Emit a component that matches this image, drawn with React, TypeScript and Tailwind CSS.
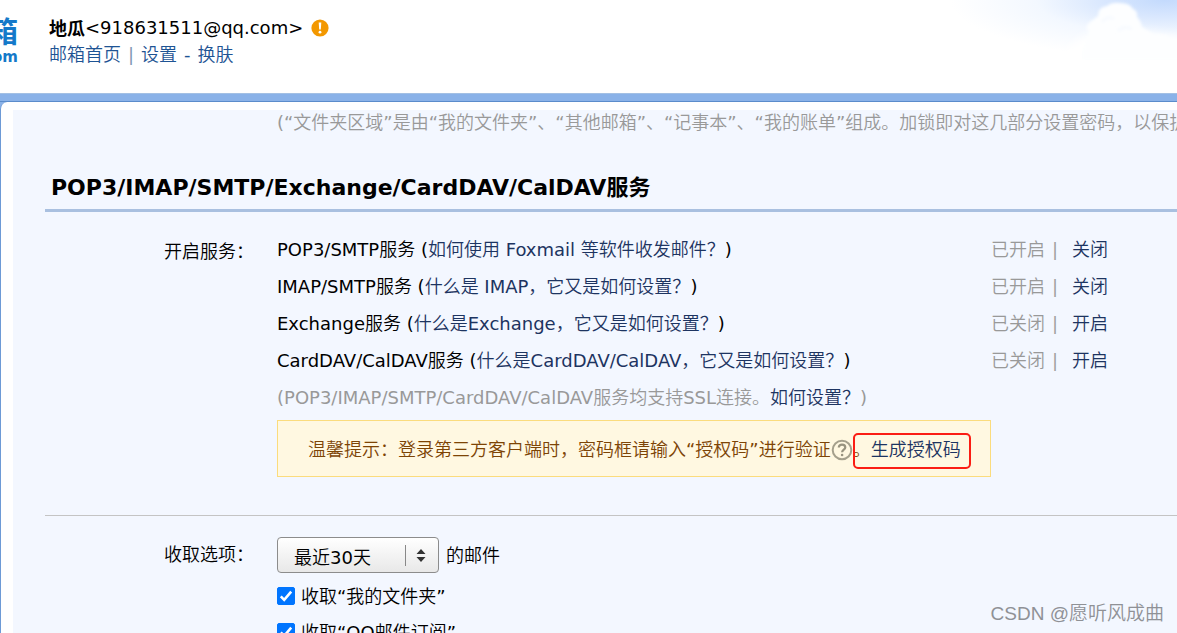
import { useState } from 'react';

type Service = {
  name: string;
  help: string;
  enabled: boolean;
};

const services: Service[] = [
  { name: 'POP3/SMTP服务', help: '如何使用 Foxmail 等软件收发邮件？', enabled: true },
  { name: 'IMAP/SMTP服务', help: '什么是 IMAP，它又是如何设置？', enabled: true },
  { name: 'Exchange服务', help: '什么是Exchange，它又是如何设置？', enabled: false },
  { name: 'CardDAV/CalDAV服务', help: '什么是CardDAV/CalDAV，它又是如何设置？', enabled: false },
];

function Sky() {
  return (
    <svg className="absolute right-0 top-0" width="237" height="60" viewBox="0 0 237 60" aria-hidden="true">
      <defs>
        <radialGradient id="sky" gradientUnits="userSpaceOnUse" cx="0" cy="0" r="1" gradientTransform="translate(225 0) scale(215 58)">
          <stop offset="0" stopColor="#c3dafd" />
          <stop offset="0.3" stopColor="#dae8fe" />
          <stop offset="0.6" stopColor="#f3f8ff" />
          <stop offset="1" stopColor="#ffffff" />
        </radialGradient>
        <filter id="soft" x="-20%" y="-20%" width="140%" height="140%">
          <feGaussianBlur stdDeviation="1.5" />
        </filter>
        <filter id="softer" x="-20%" y="-40%" width="140%" height="180%">
          <feGaussianBlur stdDeviation="4" />
        </filter>
      </defs>
      <rect width="237" height="60" fill="url(#sky)" />
      <path d="M120 60 Q140 32 160 34 L205 32 Q222 34 245 38 V66 H120 Z" fill="#fff" filter="url(#softer)" />
      <path
        d="M142 50 Q146 40 149 32 Q144 26 150 22 Q154 19 158 16 Q158 7 167 6 Q172 2 180 3 Q190 3 193 9 Q198 11 197 17 Q201 21 202 27 Q208 31 214 35 Q224 34 230 38 Q238 40 242 46 V60 H142 Z"
        fill="#fdfeff"
        filter="url(#soft)"
      />
      <path d="M162 22 Q168 15 174 19 M178 31 Q184 25 192 29" fill="none" stroke="#f7fafe" strokeWidth="3" filter="url(#soft)" />
    </svg>
  );
}

function Header() {
  return (
    <header className="relative flex h-[93px] bg-white">
      <Sky />
      <div className="flex w-[18px] flex-col items-end overflow-hidden pt-4 font-['DejaVu_Sans','Noto_Sans_CJK_SC',sans-serif] font-bold text-[#1479c9]">
        <span className="text-[29px] leading-[34px]">箱</span>
        <span className="text-[15px] leading-[14px]">om</span>
      </div>
      <div className="relative ml-[31px] pt-[14px] leading-[27px]">
        <div className="flex items-center">
          <b className="font-['Noto_Sans_CJK_SC',sans-serif]">地瓜</b>
          <span>&lt;918631511@qq.com&gt;</span>
          <svg className="ml-2" width="18" height="18" viewBox="0 0 18 18" aria-hidden="true">
            <circle cx="9" cy="9" r="8.6" fill="#f39800" />
            <path d="M7.7 3.5h2.6l-.5 7H8.2z" fill="#fff" />
            <circle cx="9" cy="13.2" r="1.4" fill="#fff" />
          </svg>
        </div>
        <nav className="text-[#1e5494]">
          <a href="#home">邮箱首页</a>
          <span className="px-[7px] text-[#7f98b5]">|</span>
          <a href="#settings">设置</a>
          <span className="px-[7px]">-</span>
          <a href="#skin">换肤</a>
        </nav>
      </div>
    </header>
  );
}

function ServiceRow({ service }: { service: Service }) {
  return (
    <li className="flex">
      <div className="w-[714px]">
        {service.name} (<a href="#help" className="text-[#1d3461]">{service.help}</a>)
      </div>
      <span className="text-[#999]">{service.enabled ? '已开启' : '已关闭'}</span>
      <span className="w-[27px] pl-[7px] text-[#a0a0a0]">|</span>
      <button type="button" className="text-[#1d3461]">{service.enabled ? '关闭' : '开启'}</button>
    </li>
  );
}

function AuthTip() {
  return (
    <div className="flex h-[57px] w-[714px] items-center border border-[#fbdc7d] bg-[#fff8e1] pl-[30px] pt-[2px] text-[#7d4405]">
      <span>温馨提示：登录第三方客户端时，密码框请输入“授权码”进行验证</span>
      <button type="button" aria-label="帮助">
        <svg width="22" height="22" viewBox="0 0 22 22" fill="none" aria-hidden="true">
          <circle cx="11" cy="11" r="9.3" stroke="#a5a08c" strokeWidth="2" />
          <path d="M7.8 8.6C7.8 6.7 9.2 5.6 11 5.6s3.3 1.1 3.3 2.8c0 2.2-3.2 2.4-3.2 4.9" stroke="#98937f" strokeWidth="2.2" />
          <circle cx="11.1" cy="16" r="1.3" fill="#98937f" />
        </svg>
      </button>
      <span className="relative">
        。<a href="#auth-code" className="text-[#1d3461]">生成授权码</a>
        <span className="pointer-events-none absolute -bottom-[6px] -right-[10px] -top-[3px] left-0 rounded-[5px] border-2 border-[#fb1d13]" />
      </span>
    </div>
  );
}

function CheckRow({ id, label }: { id: string; label: string }) {
  const [checked, setChecked] = useState(true);

  return (
    <div className="flex h-9 items-center gap-[6px]">
      <span className="relative flex">
        <input
          id={id}
          type="checkbox"
          checked={checked}
          onChange={(e) => setChecked(e.target.checked)}
          className="h-[18px] w-[18px] appearance-none rounded-[2px] border border-[#767676] bg-white checked:border-[#0075ff] checked:bg-[#0075ff]"
        />
        {checked && (
          <svg className="pointer-events-none absolute inset-0" width="18" height="18" viewBox="0 0 18 18" fill="none" aria-hidden="true">
            <path d="M3.8 9.4l3.4 3.5 7-8.2" stroke="#fff" strokeWidth="2.6" />
          </svg>
        )}
      </span>
      <label htmlFor={id}>{label}</label>
    </div>
  );
}

function ReceiveOptions() {
  return (
    <section className="flex pt-[21px]">
      <label htmlFor="range" className="w-[232px] shrink-0 pl-[119px] leading-9">收取选项：</label>
      <div>
        <div className="flex items-center">
          <span className="relative flex">
            <select
              id="range"
              className="h-9 w-[162px] appearance-none rounded-[4px] border border-[#8c8c8c] bg-linear-to-b from-white to-[#e8e8e8] pl-4 pt-1 text-black"
            >
              <option>最近30天</option>
            </select>
            <span className="pointer-events-none absolute right-[13px] top-2 flex h-[21px] items-center border-l border-[#888] pl-[10px]">
              <svg width="10" height="13" viewBox="0 0 10 13" fill="#333" aria-hidden="true">
                <path d="M5 0l4.5 5h-9zM5 13l4.5-5h-9z" />
              </svg>
            </span>
          </span>
          <span className="ml-[7px]">的邮件</span>
        </div>
        <div className="pt-[5px]">
          <CheckRow id="my-folders" label="收取“我的文件夹”" />
          <CheckRow id="subscriptions" label="收取“QQ邮件订阅”" />
        </div>
      </div>
    </section>
  );
}

export default function App() {
  return (
    <div className="relative h-screen overflow-hidden whitespace-nowrap bg-[#8ab2e8] font-['DejaVu_Sans','Noto_Sans_CJK_SC_DemiLight','Noto_Sans_CJK_SC_Light','Noto_Sans_CJK_SC',sans-serif] text-[18px] text-black">
      <Header />
      <div className="h-[9px] border-b border-t border-b-[#5b8ccb] border-t-[#a3c0e4]" />
      <div className="min-h-full rounded-tl-[7px] border-l border-[#6d9ad6] bg-white pl-3 pt-2">
        <main className="min-h-screen bg-[#f3f7ff] pl-8">
          <p className="pl-[232px] leading-[26px] text-[#999]">
            (“文件夹区域”是由“我的文件夹”、“其他邮箱”、“记事本”、“我的账单”组成。加锁即对这几部分设置密码，以保护
          </p>
          <h2 className="mt-[37px] border-b-[3px] border-[#a9c0e0] pb-[6px] pl-[6px] font-['DejaVu_Sans','Noto_Sans_CJK_SC',sans-serif] text-[22px] font-bold leading-[30px]">
            POP3/IMAP/SMTP/Exchange/CardDAV/CalDAV服务
          </h2>
          <section className="flex border-b border-[#c4c4c4] pb-[38px] pt-[19px]">
            <div className="w-[232px] shrink-0 pl-[119px] pt-[3px] leading-9">开启服务：</div>
            <div>
              <ul className="leading-[37px]">
                {services.map((service) => (
                  <ServiceRow key={service.name} service={service} />
                ))}
              </ul>
              <p className="mb-[3px] leading-[38px] text-[#999]">
                (POP3/IMAP/SMTP/CardDAV/CalDAV服务均支持SSL连接。<a href="#ssl" className="text-[#1d3461]">如何设置？</a>)
              </p>
              <AuthTip />
            </div>
          </section>
          <ReceiveOptions />
        </main>
      </div>
      <div className="absolute bottom-[5px] right-[13px] font-['Liberation_Sans','Noto_Sans_CJK_SC_DemiLight','Noto_Sans_CJK_SC_Light','Noto_Sans_CJK_SC',sans-serif] text-[19px] leading-7 text-[#8f9196]">
        CSDN @愿听风成曲
      </div>
    </div>
  );
}
